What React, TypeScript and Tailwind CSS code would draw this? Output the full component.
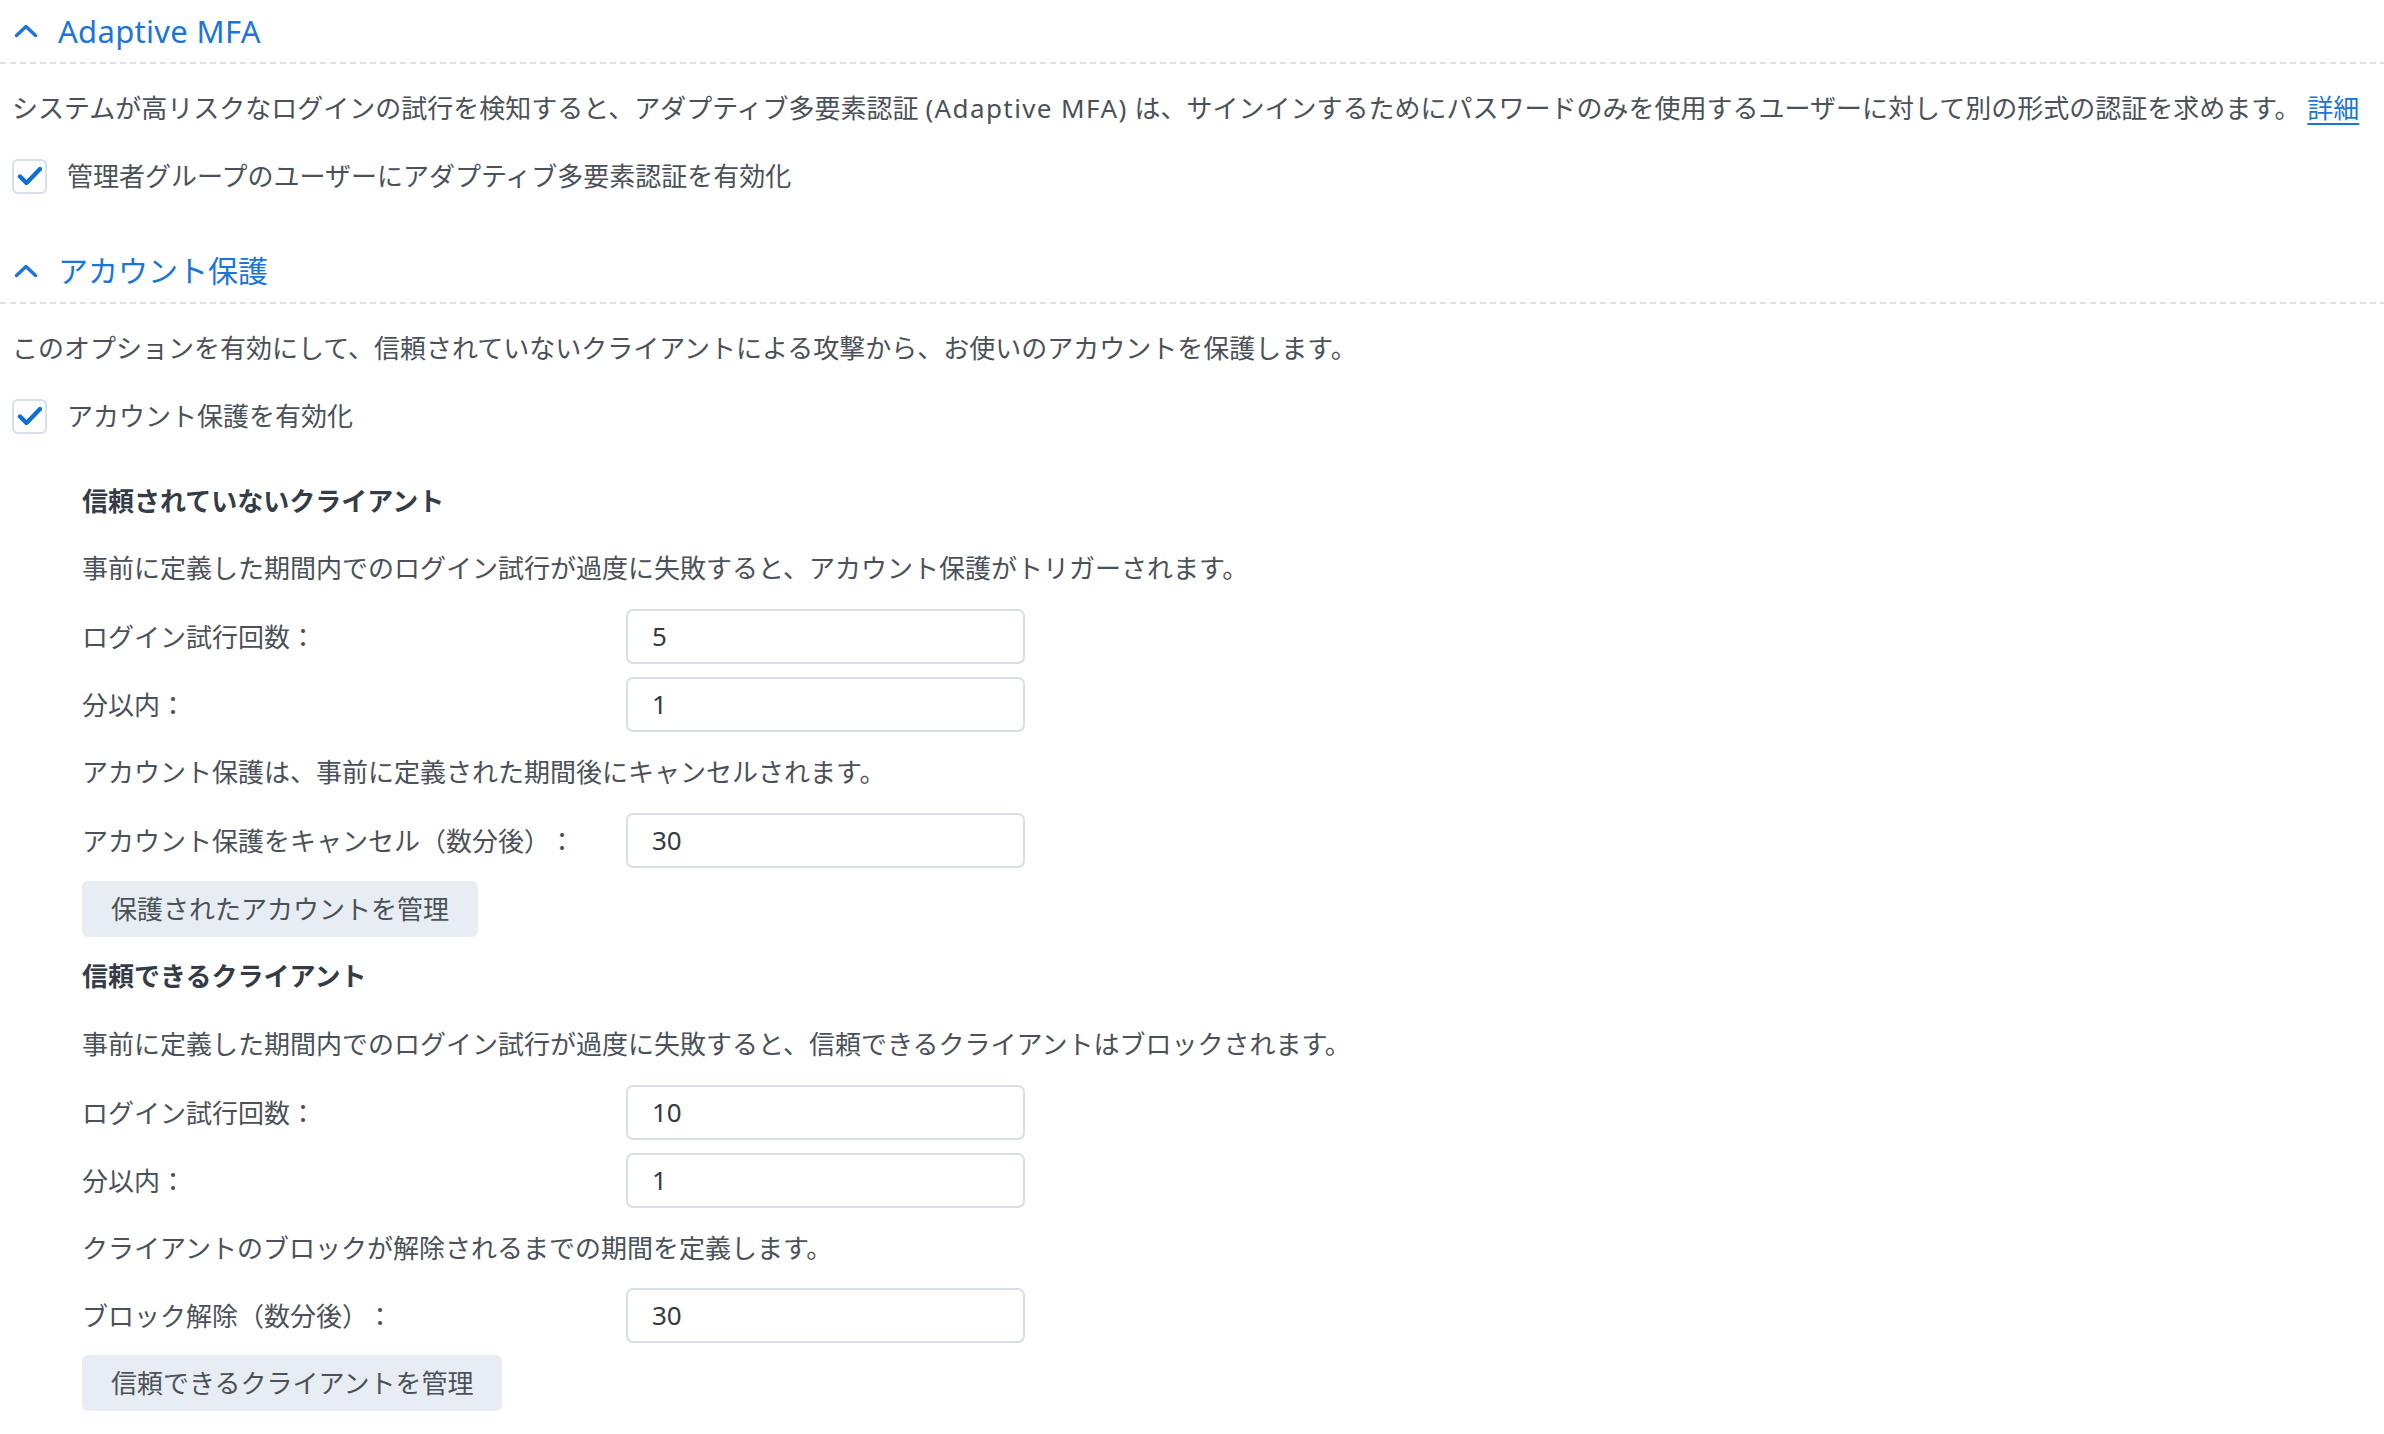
import React from "react";

const FONT = { fontFamily: '"Noto Sans", "Noto Sans CJK JP", sans-serif' };

function Chevron() {
  return (
    <svg width="24" height="14" viewBox="0 0 24 14" className="ml-[14px] shrink-0">
      <path d="M2.5 11.5 L12 2.5 L21.5 11.5" fill="none" stroke="#1a76d8" strokeWidth="3.4" strokeLinecap="round" strokeLinejoin="round" />
    </svg>
  );
}

function Header({ title, latin = false }: { title: string; latin?: boolean }) {
  return (
    <div>
      <div className="flex h-[62px] items-center">
        <Chevron />
        <span className={(latin ? "text-[31px] tracking-[0.3px]" : "text-[30px]") + " ml-[20px] leading-none text-[#1a76d8]"}>{title}</span>
      </div>
      <div className="h-[2px] w-full bg-[repeating-linear-gradient(to_right,#d9e0e7_0_6px,transparent_6px_10px)]" />
    </div>
  );
}

function Checkbox({ label }: { label: string }) {
  return (
    <div className="flex h-[34px] items-center pl-[12px]">
      <div className="flex h-[35px] w-[35px] items-center justify-center rounded-[6px] border-2 border-[#d8dfe7] bg-white">
        <svg width="26" height="22" viewBox="0 0 26 22">
          <path d="M3 11.5 L9.5 18 L23 4" fill="none" stroke="#0f6fd6" strokeWidth="4.4" strokeLinecap="round" strokeLinejoin="round" />
        </svg>
      </div>
      <span className="ml-[20px] text-[26px] leading-[40px] text-[#4b5159]">{label}</span>
    </div>
  );
}

function Field({ label, value, className = "", spacedColon = false }: { label: string; value: string; className?: string; spacedColon?: boolean }) {
  return (
    <div className={"flex items-center " + className}>
      <div className="w-[544px] shrink-0 text-[26px] leading-[40px] text-[#4b5159]">
        {label}
        <span className={spacedColon ? "ml-[12px]" : ""}>：</span>
      </div>
      <div className="flex h-[55px] w-[399px] items-center rounded-[7px] border-2 border-[#d8dfe6] bg-white pl-[24px] text-[26px] text-[#333a42]">
        {value}
      </div>
    </div>
  );
}

function Text({ children, className = "" }: { children: React.ReactNode; className?: string }) {
  return <div className={"text-[26px] leading-[40px] text-[#4b5159] " + className}>{children}</div>;
}

function SubTitle({ children, className = "" }: { children: React.ReactNode; className?: string }) {
  return <div className={"text-[26px] font-bold leading-[40px] text-[#343c47] " + className}>{children}</div>;
}

function Button({ children, className = "" }: { children: React.ReactNode; className?: string }) {
  return (
    <div className={"flex " + className}>
      <div className="flex h-[56px] items-center rounded-[6px] bg-[#e8edf3] px-[29px] text-[26px] text-[#4b5159]">{children}</div>
    </div>
  );
}

export default function App() {
  return (
    <div className="min-h-[1434px] w-full bg-white" style={FONT}>
      <Header title="Adaptive MFA" latin />
      <Text className="mt-[24px] whitespace-nowrap pl-[12px]">
        システムが高リスクなログインの試行を検知すると、アダプティブ多要素認証{" "}
        <span className="tracking-[1.4px]">(Adaptive MFA)</span>{" "}
        は、サインインするためにパスワードのみを使用するユーザーに対して別の形式の認証を求めます。{" "}
        <span className="text-[#1a76d8] underline underline-offset-[5px]">詳細</span>
      </Text>
      <div className="mt-[31px]">
        <Checkbox label="管理者グループのユーザーにアダプティブ多要素認証を有効化" />
      </div>

      <div className="mt-[47px]">
        <Header title="アカウント保護" />
      </div>
      <Text className="mt-[24px] pl-[12px]">
        このオプションを有効にして、信頼されていないクライアントによる攻撃から、お使いのアカウントを保護します。
      </Text>
      <div className="mt-[31px]">
        <Checkbox label="アカウント保護を有効化" />
      </div>

      <div className="pl-[82px]">
        <SubTitle className="mt-[48px]">信頼されていないクライアント</SubTitle>
        <Text className="mt-[27px]">事前に定義した期間内でのログイン試行が過度に失敗すると、アカウント保護がトリガーされます。</Text>
        <Field className="mt-[21px]" label="ログイン試行回数" value="5" />
        <Field className="mt-[13px]" label="分以内" value="1" />
        <Text className="mt-[20px]">アカウント保護は、事前に定義された期間後にキャンセルされます。</Text>
        <Field className="mt-[21px]" label="アカウント保護をキャンセル（数分後）" value="30" spacedColon />
        <Button className="mt-[13px]">保護されたアカウントを管理</Button>

        <SubTitle className="mt-[19px]">信頼できるクライアント</SubTitle>
        <Text className="mt-[28px]">事前に定義した期間内でのログイン試行が過度に失敗すると、信頼できるクライアントはブロックされます。</Text>
        <Field className="mt-[21px]" label="ログイン試行回数" value="10" />
        <Field className="mt-[13px]" label="分以内" value="1" />
        <Text className="mt-[20px]">クライアントのブロックが解除されるまでの期間を定義します。</Text>
        <Field className="mt-[20px]" label="ブロック解除（数分後）" value="30" spacedColon />
        <Button className="mt-[12px]">信頼できるクライアントを管理</Button>
      </div>
    </div>
  );
}
